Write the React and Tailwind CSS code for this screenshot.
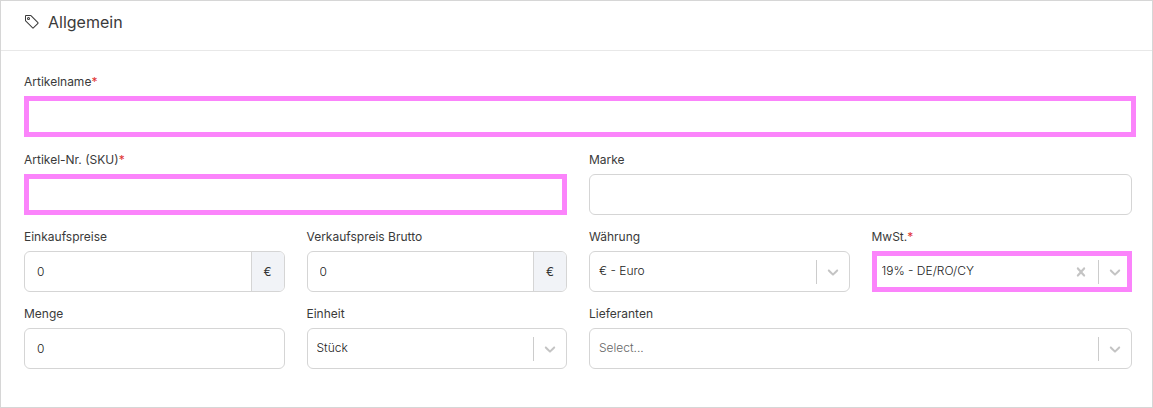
import React, { useState } from "react";
import { BsTag } from "react-icons/bs";

const controlBase = "block h-[41px] w-full bg-white text-xs leading-5 font-light outline-none";
const normalBorder = "rounded-md border border-[#d5d5d5]";
const markedBorder = "border-[5px] border-[#fb84fb]";

const Field = ({ id, label, required, className = "", children }) => (
    <div className={`flex min-w-0 flex-col gap-1 ${className}`}>
        <label htmlFor={id} className="text-xs leading-5 text-[#3a3a3a]">
            {label}
            {required && <span className="text-[#e03131]">*</span>}
        </label>
        {children}
    </div>
);

const TextInput = ({ id, value, onChange, marked }) => (
    <input
        id={id}
        type="text"
        value={value}
        onChange={onChange}
        className={`${controlBase} px-3 text-[#222222] ${marked ? markedBorder : normalBorder}`}
    />
);

const PriceInput = ({ id, value, onChange }) => (
    <div className={`flex h-[41px] overflow-hidden bg-white ${normalBorder}`}>
        <input
            id={id}
            type="text"
            value={value}
            onChange={onChange}
            className="min-w-0 flex-1 px-3 text-xs leading-5 font-light text-[#222222] outline-none"
        />
        <span className="flex w-[33px] items-center justify-center border-l border-[#d5d5d5] bg-[#f1f3f7] text-xs text-[#333333]">
            €
        </span>
    </div>
);

const Chevron = () => (
    <svg width="18" height="18" viewBox="0 0 20 20" fill="currentColor" aria-hidden="true">
        <path d="M4.516 7.548c0.436-0.446 1.043-0.481 1.576 0l3.908 3.747 3.908-3.747c0.533-0.481 1.141-0.446 1.574 0 0.436 0.445 0.408 1.197 0 1.615-0.406 0.418-4.695 4.502-4.695 4.502-0.217 0.223-0.502 0.335-0.787 0.335s-0.57-0.112-0.789-0.335c0 0-4.287-4.084-4.695-4.502s-0.436-1.17 0-1.615z" />
    </svg>
);

const Cross = () => (
    <svg width="18" height="18" viewBox="0 0 20 20" fill="currentColor" aria-hidden="true">
        <path d="M14.348 14.849c-0.469 0.469-1.229 0.469-1.697 0l-2.651-3.030-2.651 3.029c-0.469 0.469-1.229 0.469-1.697 0-0.469-0.469-0.469-1.229 0-1.697l2.758-3.15-2.759-3.152c-0.469-0.469-0.469-1.228 0-1.697s1.228-0.469 1.697 0l2.652 3.031 2.651-3.031c0.469-0.469 1.228-0.469 1.697 0s0.469 1.229 0 1.697l-2.758 3.152 2.758 3.15c0.469 0.469 0.469 1.229 0 1.698z" />
    </svg>
);

const Select = ({ id, value, onChange, options, marked, onClear }) => (
    <div className="relative">
        <select
            id={id}
            value={value}
            onChange={onChange}
            className={`${controlBase} appearance-none pr-16 pb-0.5 ${
                marked ? `${markedBorder} pl-[5px]` : `${normalBorder} pl-[9px]`
            } ${value === "" ? "text-[#666666]" : "text-[#222222]"}`}
        >
            {options.map((option) => (
                <option key={option.value} value={option.value}>
                    {option.label}
                </option>
            ))}
        </select>
        <div className="pointer-events-none absolute inset-y-0 right-0 flex items-center pr-2 text-[#c4c4c4]">
            {onClear && (
                <button
                    type="button"
                    aria-label="Auswahl löschen"
                    onClick={onClear}
                    className="pointer-events-auto mr-2"
                >
                    <Cross />
                </button>
            )}
            <span className="mr-[7px] h-6 w-px bg-[#cccccc]" />
            <Chevron />
        </div>
    </div>
);

const App = () => {
    const [form, setForm] = useState({
        name: "",
        sku: "",
        brand: "",
        purchasePrice: "0",
        salesPrice: "0",
        currency: "eur",
        vat: "19",
        quantity: "0",
        unit: "piece",
        supplier: "",
    });

    const handleChange = (key) => (e) => {
        setForm({ ...form, [key]: e.target.value });
    };

    return (
        <section className="min-h-screen border border-[#d6d6d6] bg-white font-['Inter',sans-serif]">
            <header className="flex items-center gap-2 border-b border-[#e8e8e8] px-[23px] pt-[9px] pb-4 text-[#3a3a3a]">
                <BsTag size={16} />
                <h1 className="text-base leading-6">Allgemein</h1>
            </header>

            <form className="grid grid-cols-4 gap-x-[22px] gap-y-3 pt-[21px] pr-5 pb-9 pl-[23px]">
                <Field id="name" label="Artikelname" required className="col-span-4 -mr-1 pb-px">
                    <TextInput id="name" value={form.name} onChange={handleChange("name")} marked />
                </Field>

                <Field id="sku" label="Artikel-Nr. (SKU)" required className="col-span-2">
                    <TextInput id="sku" value={form.sku} onChange={handleChange("sku")} marked />
                </Field>
                <Field id="brand" label="Marke" className="col-span-2">
                    <TextInput id="brand" value={form.brand} onChange={handleChange("brand")} />
                </Field>

                <Field id="purchasePrice" label="Einkaufspreise">
                    <PriceInput
                        id="purchasePrice"
                        value={form.purchasePrice}
                        onChange={handleChange("purchasePrice")}
                    />
                </Field>
                <Field id="salesPrice" label="Verkaufspreis Brutto">
                    <PriceInput
                        id="salesPrice"
                        value={form.salesPrice}
                        onChange={handleChange("salesPrice")}
                    />
                </Field>
                <Field id="currency" label="Währung">
                    <Select
                        id="currency"
                        value={form.currency}
                        onChange={handleChange("currency")}
                        options={[{ value: "eur", label: "€ - Euro" }]}
                    />
                </Field>
                <Field id="vat" label="MwSt." required>
                    <Select
                        id="vat"
                        value={form.vat}
                        onChange={handleChange("vat")}
                        onClear={() => setForm({ ...form, vat: "" })}
                        options={[
                            { value: "19", label: "19% - DE/RO/CY" },
                            { value: "", label: "Select..." },
                        ]}
                        marked
                    />
                </Field>

                <Field id="quantity" label="Menge">
                    <TextInput id="quantity" value={form.quantity} onChange={handleChange("quantity")} />
                </Field>
                <Field id="unit" label="Einheit">
                    <Select
                        id="unit"
                        value={form.unit}
                        onChange={handleChange("unit")}
                        options={[{ value: "piece", label: "Stück" }]}
                    />
                </Field>
                <Field id="supplier" label="Lieferanten" className="col-span-2">
                    <Select
                        id="supplier"
                        value={form.supplier}
                        onChange={handleChange("supplier")}
                        options={[{ value: "", label: "Select..." }]}
                    />
                </Field>
            </form>
        </section>
    );
};

export default App;
